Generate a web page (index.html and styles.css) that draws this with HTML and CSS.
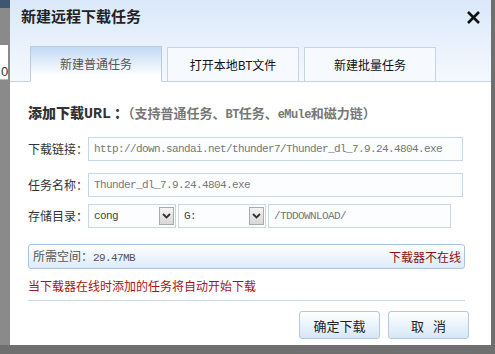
FILE: index.html
```html
<!DOCTYPE html>
<html lang="zh-CN">
<head>
    <meta charset="UTF-8">
    <title>新建远程下载任务</title>
    <link rel="stylesheet" href="styles.css">
</head>
<body>
    <div class="side-left">
        <div class="behind">0</div>
    </div>

    <div class="dialog">
        <div class="header">
            <div class="title-row">
                <h1>新建远程下载任务</h1>
                <svg class="close" width="15" height="15" viewBox="0 0 15 15"><path d="M2 2 L13 13 M13 2 L2 13" stroke="#111" stroke-width="2.6"/></svg>
            </div>
            <div class="tabs">
                <div class="tab active">新建普通任务</div>
                <div class="tab">打开本地BT文件</div>
                <div class="tab">新建批量任务</div>
            </div>
        </div>

        <div class="content">
            <h2><b>添加下载<span class="mono">URL</span>：</b>（支持普通任务、<span class="mono">BT</span>任务、<span class="mono">eMule</span>和磁力链）</h2>

            <div class="row">
                <label>下载链接：</label>
                <div class="field wide mono">http://down.sandai.net/thunder7/Thunder_dl_7.9.24.4804.exe</div>
            </div>
            <div class="row">
                <label>任务名称：</label>
                <div class="field wide mono">Thunder_dl_7.9.24.4804.exe</div>
            </div>
            <div class="row tight">
                <label>存储目录：</label>
                <div class="select"><span class="mono">cong</span><span class="arrow"><svg width="9" height="6" viewBox="0 0 9 6"><path d="M1 1 L4.5 4.5 L8 1" fill="none" stroke="#333" stroke-width="1.8"/></svg></span></div>
                <div class="select"><span class="mono">G:</span><span class="arrow"><svg width="9" height="6" viewBox="0 0 9 6"><path d="M1 1 L4.5 4.5 L8 1" fill="none" stroke="#333" stroke-width="1.8"/></svg></span></div>
                <div class="field path mono">/TDDOWNLOAD/</div>
            </div>

            <div class="space">
                <span>所需空间：<span class="mono">29.47MB</span></span>
                <span class="offline">下载器不在线</span>
            </div>

            <p class="notice">当下载器在线时添加的任务将自动开始下载</p>

            <div class="buttons">
                <button>确定下载</button>
                <button class="spaced">取 消</button>
            </div>
        </div>
    </div>

    <div class="side-right"></div>
</body>
</html>
```

FILE: styles.css
```css
html, body {
    margin: 0;
    height: 100%;
}
body {
    display: flex;
    background: #6f6f6f;
    font-family: "Noto Sans CJK SC", "Liberation Sans", sans-serif;
    font-size: 12px;
    line-height: 16px;
    color: #333;
    padding-bottom: 9px;
    box-sizing: border-box;
    overflow: hidden;
}
.mono {
    font-family: "Liberation Mono", "DejaVu Sans Mono", monospace;
    font-size: 11px;
    letter-spacing: -0.6px;
}
.side-left {
    width: 10px;
    flex-shrink: 0;
    background: linear-gradient(#3f5670 0, #3f5670 8px, #8a8a8a 8px);
    padding-top: 45px;
}
.behind {
    height: 35px;
    background: #fff;
    border-bottom: 1px solid #bbb;
    margin-right: 2px;
    font-family: "Liberation Sans", sans-serif;
    font-size: 13px;
    color: #333;
    line-height: 12px;
    display: flex;
    align-items: flex-end;
    padding-left: 1px;
    padding-bottom: 1px;
    box-sizing: border-box;
}
.side-right {
    width: 8px;
    flex-shrink: 0;
    background: #6f6f6f;
}
.dialog {
    flex: 1;
    background: #fff;
    display: flex;
    flex-direction: column;
}
.header {
    background: linear-gradient(#dae8f9, #f5f9fe);
    border-bottom: 1px solid #c2d3e4;
}
.title-row {
    height: 46px;
    display: flex;
    justify-content: space-between;
    align-items: flex-start;
    padding: 0 10px 0 11px;
}
h1 {
    margin: 7px 0 0;
    font-size: 15px;
    line-height: 18px;
    font-weight: bold;
    color: #222;
}
.close {
    margin-top: 10px;
}
.tabs {
    display: flex;
    gap: 5px;
    padding-left: 20px;
    height: 35px;
    align-items: flex-end;
}
.tab {
    width: 132px;
    height: 35px;
    margin-bottom: -1px;
    box-sizing: border-box;
    border: 1px solid #c4d5e6;
    border-bottom-color: #c2d3e4;
    background: #f6f9fd;
    color: #111;
    display: flex;
    align-items: center;
    justify-content: center;
}
.tab.active {
    height: 36px;
    background: linear-gradient(#c3d9f5, #ffffff 85%);
    border-color: #b7cce2;
    border-bottom-color: #fff;
    color: #555;
}
.content {
    padding: 21px 22px 0 18px;
}
h2 {
    margin: 0 0 13px;
    font-size: 13px;
    line-height: 18px;
    font-weight: bold;
    color: #777;
}
h2 b {
    font-size: 14px;
    color: #333;
}
h2 .mono {
    font-weight: bold;
    font-size: 12px;
    letter-spacing: -0.6px;
}
h2 b .mono {
    font-size: 15px;
    letter-spacing: 0;
    margin-right: 3px;
}
.row {
    display: flex;
    align-items: center;
    margin-bottom: 12px;
}
.row + .row {
    margin-bottom: 7px;
}
.row.tight {
    margin-bottom: 16px;
}
label {
    width: 60px;
    flex-shrink: 0;
    white-space: nowrap;
    color: #333;
}
.field, .select {
    height: 24px;
    flex-shrink: 0;
    box-sizing: border-box;
    border: 1px solid #c6d7e7;
    background: #fcfdff;
    color: #777;
    display: flex;
    align-items: center;
    padding-left: 5px;
    white-space: nowrap;
}
.wide {
    width: 375px;
}
.select {
    width: 88px;
    justify-content: space-between;
    padding-right: 1px;
    margin-right: 2px;
    color: #444;
}
.arrow {
    width: 15px;
    height: 18px;
    background: linear-gradient(#f4f4f4, #d8d8d8);
    border: 1px solid #aaa;
    box-sizing: border-box;
    display: flex;
    align-items: center;
    justify-content: center;
}
.path {
    width: 183px;
}
.space {
    width: 437px;
    height: 25px;
    box-sizing: border-box;
    border: 1px solid #a9c4de;
    border-radius: 3px;
    background: linear-gradient(#ffffff, #dcebfa);
    display: flex;
    justify-content: space-between;
    align-items: center;
    padding: 0 3px 0 4px;
    color: #555;
}
.space .mono {
    color: #555;
}
.offline {
    color: #8b1010;
}
.notice {
    margin: 8px 0 0;
    width: 437px;
    line-height: 18px;
    padding-bottom: 5px;
    border-bottom: 1px solid #c7d7e6;
    color: #a51515;
}
.buttons {
    display: flex;
    justify-content: flex-end;
    gap: 8px;
    width: 441px;
    margin-top: 10px;
}
button {
    width: 81px;
    height: 28px;
    border: 1px solid #b4c8dc;
    border-radius: 3px;
    background: linear-gradient(#ffffff, #d6e6f7);
    font-family: "Noto Sans CJK SC", sans-serif;
    font-size: 13px;
    color: #222;
    padding: 0;
}
button.spaced {
    word-spacing: 6px;
}
```
